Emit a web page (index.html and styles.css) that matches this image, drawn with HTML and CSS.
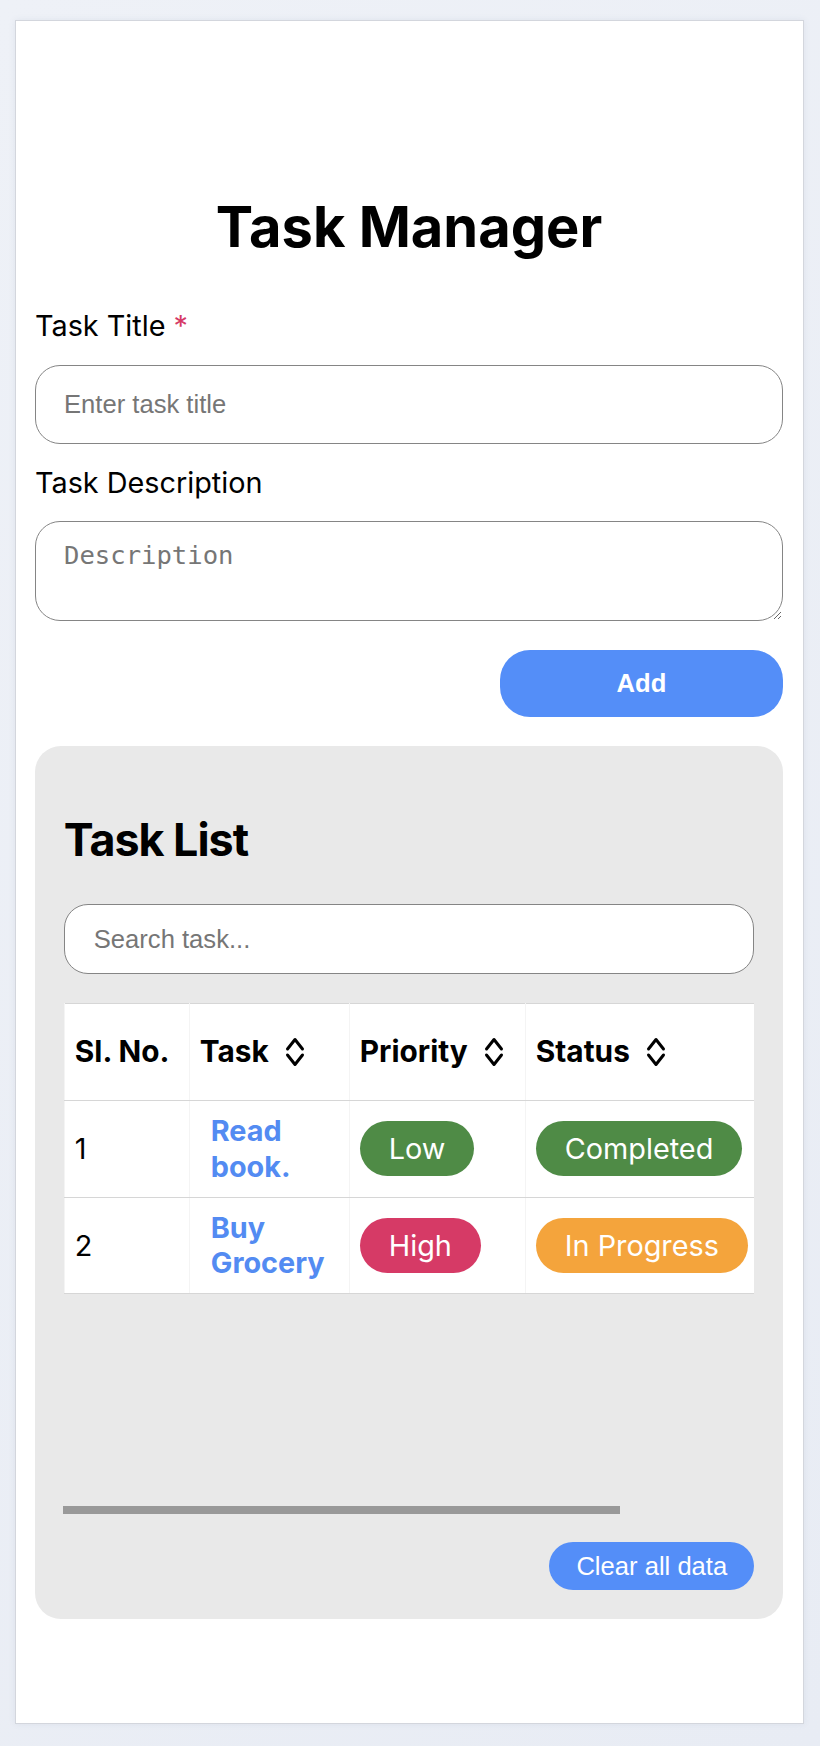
FILE: index.html
```html
<!DOCTYPE html>
<html lang="en">
<head>
<meta charset="utf-8">
<title>Task Manager</title>
<link rel="stylesheet" href="styles.css">
</head>
<body>
<div class="frame">
  <h1 class="title">Task Manager</h1>
  <form class="task-form">
    <label class="field-label" for="title">Task Title <span class="req">*</span></label>
    <input id="title" class="text-input" type="text" placeholder="Enter task title">
    <label class="field-label" for="desc">Task Description</label>
    <textarea id="desc" class="text-area" placeholder="Description"></textarea>
    <div class="form-actions">
      <button type="button" class="btn-add">Add</button>
    </div>
  </form>

  <section class="panel">
    <h2 class="panel-title">Task List</h2>
    <input class="text-input search" type="text" placeholder="Search task...">
    <div class="table-wrap">
      <div class="table-scroll">
        <table class="task-table">
          <colgroup>
            <col class="c-no"><col class="c-task"><col class="c-pri"><col class="c-status"><col class="c-act">
          </colgroup>
          <thead>
            <tr>
              <th>Sl. No.</th>
              <th><span class="th-sort">Task <svg class="sort-ico" viewBox="0 0 20 34" width="20" height="34"><path d="M2.5 14 L10 4.5 L17.5 14 M2.5 20 L10 29.5 L17.5 20"/></svg></span></th>
              <th><span class="th-sort">Priority <svg class="sort-ico" viewBox="0 0 20 34" width="20" height="34"><path d="M2.5 14 L10 4.5 L17.5 14 M2.5 20 L10 29.5 L17.5 20"/></svg></span></th>
              <th><span class="th-sort">Status <svg class="sort-ico" viewBox="0 0 20 34" width="20" height="34"><path d="M2.5 14 L10 4.5 L17.5 14 M2.5 20 L10 29.5 L17.5 20"/></svg></span></th>
              <th></th>
            </tr>
          </thead>
          <tbody>
            <tr>
              <td>1</td>
              <td><span class="task-link">Read book.</span></td>
              <td><span class="badge green">Low</span></td>
              <td><span class="badge green">Completed</span></td>
              <td></td>
            </tr>
            <tr>
              <td>2</td>
              <td><span class="task-link">Buy Grocery</span></td>
              <td><span class="badge red">High</span></td>
              <td><span class="badge orange">In Progress</span></td>
              <td></td>
            </tr>
          </tbody>
        </table>
      </div>
      <div class="scroll-thumb"></div>
    </div>
    <div class="panel-actions">
      <button type="button" class="btn-clear">Clear all data</button>
    </div>
  </section>
</div>
</body>
</html>
```

FILE: styles.css
```css
html, body {
  margin: 0;
  padding: 0;
}

body {
  background: linear-gradient(135deg, #eef1f7 0%, #e8ecf4 100%);
  font-family: "Inter", "Noto Sans", sans-serif;
  color: #000;
  padding: 20px 16px 22px 15px;
  min-height: 1746px;
  box-sizing: border-box;
}

.frame {
  box-sizing: border-box;
  width: 789px;
  height: 1704px;
  background: #fff;
  border: 1px solid #d3d6dd;
  box-shadow: 0 0 6px rgba(120, 130, 160, 0.12);
  padding: 172px 20px 0 19px;
  display: flex;
  flex-direction: column;
}

.title {
  margin: 0 0 47px;
  font-size: 56px;
  line-height: 68px;
  font-weight: 700;
  text-align: center;
  letter-spacing: 0;
}

.task-form {
  display: flex;
  flex-direction: column;
}

.field-label {
  font-size: 28.8px;
  line-height: 35px;
  margin-bottom: 21.5px;
}

.req {
  color: #d63a66;
}

.text-input {
  box-sizing: border-box;
  height: 79px;
  width: 100%;
  border: 1.6px solid #858585;
  border-radius: 25px;
  padding: 0 28px;
  font-family: "Liberation Sans", Arial, sans-serif;
  font-size: 25.6px;
  background: #fff;
  margin: 0 0 21px;
  outline: none;
}

.text-input::placeholder,
.text-area::placeholder {
  color: #767676;
}

.text-area {
  box-sizing: border-box;
  height: 100px;
  width: 100%;
  border: 1.6px solid #858585;
  border-radius: 25px;
  padding: 18px 28px;
  font-family: "DejaVu Sans Mono", "Liberation Mono", monospace;
  font-size: 25.6px;
  margin: 0;
  outline: none;
}

.form-actions {
  display: flex;
  justify-content: flex-end;
  margin-top: 29px;
}

.btn-add {
  width: 283px;
  height: 67px;
  border: none;
  border-radius: 30px;
  background: #548ef8;
  color: #fff;
  font-family: "Liberation Sans", Arial, sans-serif;
  font-size: 25.6px;
  font-weight: 700;
}

.panel {
  margin-top: 29px;
  background: #e9e9e9;
  border-radius: 26px;
  padding: 29px 28.8px 29px;
  display: flex;
  flex-direction: column;
}

.panel-title {
  margin: 38px 0 37px;
  font-size: 44.8px;
  line-height: 54px;
  font-weight: 700;
  letter-spacing: -1px;
}

.search {
  height: 70px;
  border-radius: 24px;
  padding: 0 29px;
  margin-bottom: 29px;
}

.table-wrap {
  height: 511px;
  display: flex;
  flex-direction: column;
}

.table-scroll {
  flex: 1;
  overflow: hidden;
}

.scroll-thumb {
  width: 557px;
  height: 8px;
  margin-left: -1px;
  background: #999;
}

.task-table {
  width: 857px;
  table-layout: fixed;
  border-collapse: collapse;
  background: #fff;
  border: 1.6px solid #d6d6d6;
}

.c-no { width: 125px; }
.c-task { width: 160px; }
.c-pri { width: 176px; }
.c-status { width: 230px; }
.c-act { width: 166px; }

.task-table th,
.task-table td {
  text-align: left;
  vertical-align: middle;
  border-left: 1px solid #f4f4f4;
  border-bottom: 1.6px solid #d6d6d6;
  padding: 0 10px;
}

.task-table th {
  height: 95.8px;
  font-size: 29.8px;
  line-height: 35px;
  font-weight: 700;
  white-space: nowrap;
}

.task-table td {
  height: 95.8px;
  font-size: 28.8px;
  line-height: 35.5px;
}

.th-sort {
  display: inline-flex;
  align-items: center;
  gap: 16px;
}

.sort-ico {
  display: block;
  fill: none;
  stroke: #000;
  stroke-width: 3;
  stroke-linecap: round;
  stroke-linejoin: round;
}

.task-link {
  display: block;
  padding-left: 11px;
  color: #538bf2;
  font-weight: 700;
}

.badge {
  display: inline-block;
  height: 55px;
  line-height: 55px;
  padding: 0 29px;
  border-radius: 28px;
  color: #fff;
  font-size: 28.8px;
  white-space: nowrap;
}

.badge.green { background: #4f8b46; }
.badge.red { background: #d63a66; }
.badge.orange { background: #f4a43c; }

.panel-actions {
  display: flex;
  justify-content: flex-end;
  margin-top: 28px;
}

.btn-clear {
  height: 48px;
  padding: 0 27px;
  border: none;
  border-radius: 24px;
  background: #548ef8;
  color: #fff;
  font-family: "Liberation Sans", Arial, sans-serif;
  font-size: 25.6px;
}
```
